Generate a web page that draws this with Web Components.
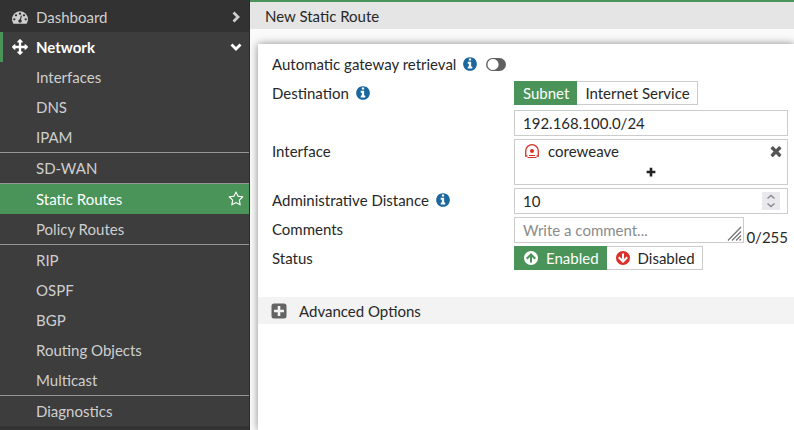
<!DOCTYPE html>
<html lang="en">
<head>
<meta charset="utf-8">
<title>New Static Route</title>
<style>
html, body { margin: 0; height: 100%; }
body { font: 15px/20px Lato, "Liberation Sans", sans-serif; color: #282828; background: #fafafa; overflow: hidden; }
</style>
</head>
<body>
<app-shell></app-shell>
<script>
const define = (name, html, setup) => customElements.define(name, class extends HTMLElement {
  constructor() {
    super();
    this.attachShadow({ mode: "open" }).innerHTML = html;
  }
  connectedCallback() { if (setup) setup(this, this.shadowRoot); }
});

const ICONS = {
  gauge: '<path d="M384 1152q0-53-37.5-90.5t-90.5-37.5-90.5 37.5-37.5 90.5 37.5 90.5 90.5 37.5 90.5-37.5 37.5-90.5zm192-448q0-53-37.5-90.5t-90.5-37.5-90.5 37.5-37.5 90.5 37.5 90.5 90.5 37.5 90.5-37.5 37.5-90.5zm428 481l101-382q6-26-7.5-48.5t-38.5-29.5-48 6.5-30 39.5l-101 382q-60 5-107 43.5t-63 98.5q-20 77 20 146t117 89 146-20 89-117q16-60-6-117t-72-91zm660-33q0-53-37.5-90.5t-90.5-37.5-90.5 37.5-37.5 90.5 37.5 90.5 90.5 37.5 90.5-37.5 37.5-90.5zm-640-640q0-53-37.5-90.5t-90.5-37.5-90.5 37.5-37.5 90.5 37.5 90.5 90.5 37.5 90.5-37.5 37.5-90.5zm448 192q0-53-37.5-90.5t-90.5-37.5-90.5 37.5-37.5 90.5 37.5 90.5 90.5 37.5 90.5-37.5 37.5-90.5zm320 448q0 261-141 483-19 29-54 29h-1402q-35 0-54-29-141-221-141-483 0-182 71-348t191-286 286-191 348-71 348 71 286 191 191 286 71 348z"/>',
  move: '<path d="M1792 896q0 26-19 45l-256 256q-19 19-45 19t-45-19-19-45v-128h-384v384h128q26 0 45 19t19 45-19 45l-256 256q-19 19-45 19t-45-19l-256-256q-19-19-19-45t19-45 45-19h128v-384h-384v128q0 26-19 45t-45 19-45-19l-256-256q-19-19-19-45t19-45l256-256q19-19 45-19t45 19 19 45v128h384v-384h-128q-26 0-45-19t-19-45 19-45l256-256q19-19 45-19t45 19l256 256q19 19 19 45t-19 45-45 19h-128v384h384v-128q0-26 19-45t45-19 45 19l256 256q19 19 19 45z"/>',
  star: '<path d="M1201 1004l306-297-422-62-189-382-189 382-422 62 306 297-73 421 378-199 377 199zm527-357q0 22-26 48l-363 354 86 500q1 7 1 20 0 50-41 50-19 0-40-12l-449-236-449 236q-22 12-40 12-21 0-31.5-14.5t-10.5-35.5q0-6 2-20l86-500-364-354q-25-27-25-48 0-37 56-46l502-73 225-455q19-41 49-41t49 41l225 455 502 73q56 9 56 46z"/>',
  info: '<path d="M1152 1376v-160q0-14-9-23t-23-9h-96v-512q0-14-9-23t-23-9h-320q-14 0-23 9t-9 23v160q0 14 9 23t23 9h96v320h-96q-14 0-23 9t-9 23v160q0 14 9 23t23 9h448q14 0 23-9t9-23zm-128-896v-160q0-14-9-23t-23-9h-192q-14 0-23 9t-9 23v160q0 14 9 23t23 9h192q14 0 23-9t9-23zm640 416q0 209-103 385.5t-279.5 279.5-385.5 103-385.5-103-279.5-279.5-103-385.5 103-385.5 279.5-279.5 385.5-103 385.5 103 279.5 279.5 103 385.5z"/>',
  times: '<path d="M1490 1322q0 40-28 68l-136 136q-28 28-68 28t-68-28l-294-294-294 294q-28 28-68 28t-68-28l-136-136q-28-28-28-68t28-68l294-294-294-294q-28-28-28-68t28-68l136-136q28-28 68-28t68 28l294 294 294-294q28-28 68-28t68 28l136 136q28 28 28 68t-28 68l-294 294 294 294q28 28 28 68z"/>',
  right: ['M5.5 3.5 10 8l-4.500 4.500', 2.8],
  down: ['M3.500 5.500 8 10l4.500-4.500', 2.8],
  plus: ['M8 3v10M3 8h10', 3],
};
const SMALL = {
  up: '<path fill-rule="evenodd" d="M8 1a7 7 0 1 0 0 14A7 7 0 0 0 8 1zM8 3l5 5-1.500 1.500L9 7.100V12.500H7V7.100L4.500 9.500 3 8z"/>',
  downcircle: '<path fill-rule="evenodd" d="M8 1a7 7 0 1 0 0 14A7 7 0 0 0 8 1zM8 13l5-5-1.500-1.500L9 8.900V3.500H7V8.900L4.500 6.500 3 8z"/>',
  square: '<path fill-rule="evenodd" d="M3 .5h10A2.500 2.500 0 0 1 15.500 3v10a2.500 2.500 0 0 1-2.500 2.500H3A2.500 2.500 0 0 1 .5 13V3A2.500 2.500 0 0 1 3 .5zM6.700 3v3.700H3v2.600h3.700V13h2.600V9.300H13V6.700H9.300V3z"/>',
  tunnel: '<g fill="none" stroke="currentColor"><path stroke-width="1.300" d="M3.500 13H1.700V8a6.300 6.300 0 0 1 12.600 0v5H12.500"/><path stroke-width="1" d="M5 12.500h6M3.500 14.500h9"/></g><circle cx="8" cy="8" r="2"/>',
  grip: '<path d="M1 14.500 14 1M5 14.500 14 5.500M9 14.500 14 9.500M12.500 14.500 14 13" fill="none" stroke="#777" stroke-width="1.300"/>',
  spin: '<path d="M4.500 5.500 8 2.500l3.500 3M4.500 10.500l3.500 3 3.500-3" fill="none" stroke="#8a8a92" stroke-width="1.500"/>',
};
define("ui-icon", `<style>:host{display:block;width:16px;height:16px;flex:none}svg{display:block;width:100%;height:100%;fill:currentColor}</style><span></span>`, (el, root) => {
  const n = el.getAttribute("name");
  let box = 16, body = SMALL[n];
  if (!body) {
    if (Array.isArray(ICONS[n])) body = `<path d="${ICONS[n][0]}" fill="none" stroke="currentColor" stroke-width="${ICONS[n][1]}"/>`;
    else { body = ICONS[n]; box = 1792; }
  }
  root.querySelector("span").innerHTML = `<svg viewBox="0 0 ${box} ${box}" aria-hidden="true">${body}</svg>`;
});

define("nav-group", `<style>
:host{display:block}
a{display:flex;align-items:center;gap:8px;height:30px;box-sizing:border-box;padding:0 5px 0 12px;color:#cfcfcf;text-decoration:none}
span{flex:1}
:host([open]) a{background:#3d3d3d;color:#fff;font-weight:bold;border-left:3px solid #4a9459;padding-left:9px}
.items{background:#3d3d3d}
</style><a href="#"><slot name="icon"></slot><span><slot name="title"></slot></span><slot name="arrow"></slot></a><div class="items"><slot></slot></div>`);

define("nav-link", `<style>
:host{display:block}
:host([ruled]){border-top:1px solid #969696}
a{display:flex;align-items:center;justify-content:space-between;height:30px;padding:0 5px 0 36px;color:#cfcfcf;text-decoration:none}
:host([current]) a{background:#4a9459;color:#fff}
</style><a href="#"><slot></slot><slot name="end"></slot></a>`);

define("side-nav", `<style>
:host{display:block;box-sizing:border-box;background:#323232;border-right:1px solid #2b2b2b;padding-top:2px}
</style><nav aria-label="Main">
<nav-group><ui-icon slot="icon" name="gauge"></ui-icon><span slot="title">Dashboard</span><ui-icon slot="arrow" name="right"></ui-icon></nav-group>
<nav-group open><ui-icon slot="icon" name="move"></ui-icon><span slot="title">Network</span><ui-icon slot="arrow" name="down"></ui-icon>
<nav-link>Interfaces</nav-link><nav-link>DNS</nav-link><nav-link>IPAM</nav-link>
<nav-link ruled>SD-WAN</nav-link>
<nav-link ruled current>Static Routes<ui-icon slot="end" name="star"></ui-icon></nav-link>
<nav-link>Policy Routes</nav-link>
<nav-link ruled>RIP</nav-link><nav-link>OSPF</nav-link><nav-link>BGP</nav-link><nav-link>Routing Objects</nav-link><nav-link>Multicast</nav-link>
<nav-link ruled>Diagnostics</nav-link></nav-group></nav>`);

define("form-row", `<style>
:host{display:grid;grid-template-columns:242px minmax(0,1fr);align-items:start}
:host([inline]){grid-template-columns:auto 1fr;column-gap:8px;min-height:26px}
.label{display:flex;align-items:center;gap:6px;min-height:24px}
.field{min-width:0}
</style><div class="label"><slot name="label"></slot></div><div class="field"><slot></slot></div>`);

define("segment-option", `<style>
:host{display:block}
button{display:flex;align-items:center;gap:7px;height:24px;box-sizing:border-box;margin:0;padding:0 7px 0 8px;border:1px solid #ccc;border-left-width:0;background:#fff;color:#282828;font:inherit}
:host([selected]) button{background:#4a9459;border-color:#4a9459;color:#fff;border-left-width:1px}
</style><button type="button"><slot></slot></button>`, (el, root) => {
  root.querySelector("button").setAttribute("aria-pressed", el.hasAttribute("selected"));
});

define("route-form", `<style>
:host{display:block}
form{display:grid;gap:3px;padding:8px 6px 0 14px}
.info{color:#1b679f}
.segments{display:flex}
.stack{display:grid;gap:5px}
.box{box-sizing:border-box;border:1px solid #ccc;background:#fff;width:100%}
input,textarea{display:block;font:inherit;color:inherit;margin:0;border-radius:0;outline:0}
input.box,textarea.box{height:26px;padding:2px 8px}
textarea{resize:none;overflow:hidden}
textarea::placeholder{color:#8c8c8c;opacity:1}
input[type=number]{appearance:textfield}
input[type=number]::-webkit-inner-spin-button{display:none}
.switch{appearance:none;box-sizing:border-box;width:20px;height:13px;margin:6px 0 0;border-radius:7px;background:radial-gradient(circle at 7px 50%,#fff 5px,#606060 6px)}
.number,.comment{position:relative}
.number button{position:absolute;right:8px;top:4px;display:grid;place-items:center;width:18px;height:18px;padding:0;border:0;background:#e9e9ed}
.comments{display:flex;align-items:flex-end;gap:2px}
.comment{flex:1;min-width:0}
.comment ui-icon{position:absolute;right:1px;bottom:1px}
.count{line-height:12px}
.members{height:46px;display:grid;grid-template-rows:22px 20px}
.member{display:flex;align-items:center;gap:8px;padding:0 3px 0 9px}
.member span{flex:1}
.members button{display:grid;place-items:center;border:0;padding:0;background:none;color:#555}
.members .add{justify-self:center;width:16px;color:#222}
.add ui-icon{width:14px;height:14px}
.tunnel{color:#d9302c}
.red{color:#d9302c}
.advanced{display:flex;align-items:center;gap:12px;width:100%;height:27px;margin-top:27px;padding:0 13px;border:0;background:#f3f3f3;color:#282828;font:inherit}
.advanced ui-icon{color:#646464}
</style>
<form>
<form-row inline><label slot="label" for="auto">Automatic gateway retrieval</label><ui-icon slot="label" class="info" name="info"></ui-icon><input class="switch" id="auto" type="checkbox"></form-row>
<form-row><label slot="label" for="dest">Destination</label><ui-icon slot="label" class="info" name="info"></ui-icon>
<div class="stack"><div class="segments" role="group" aria-label="Destination type"><segment-option selected>Subnet</segment-option><segment-option>Internet Service</segment-option></div><input class="box" id="dest" type="text" value="192.168.100.0/24"></div></form-row>
<form-row><span slot="label">Interface</span>
<div class="box members"><div class="member"><ui-icon class="tunnel" name="tunnel"></ui-icon><span>coreweave</span><button type="button" aria-label="Remove coreweave"><ui-icon name="times"></ui-icon></button></div><button class="add" type="button" aria-label="Add interface"><ui-icon name="plus"></ui-icon></button></div></form-row>
<form-row><label slot="label" for="distance">Administrative Distance</label><ui-icon slot="label" class="info" name="info"></ui-icon>
<div class="number"><input class="box" id="distance" type="number" value="10"><button type="button" aria-label="Change distance"><ui-icon name="spin"></ui-icon></button></div></form-row>
<form-row><label slot="label" for="comments">Comments</label>
<div class="comments"><div class="comment"><textarea class="box" id="comments" rows="1" placeholder="Write a comment..."></textarea><ui-icon name="grip"></ui-icon></div><span class="count">0/255</span></div></form-row>
<form-row><span slot="label">Status</span>
<div class="segments" role="group" aria-label="Status"><segment-option selected><ui-icon name="up"></ui-icon>Enabled</segment-option><segment-option><ui-icon class="red" name="downcircle"></ui-icon>Disabled</segment-option></div></form-row>
</form>
<button class="advanced" type="button" aria-expanded="false"><ui-icon name="square"></ui-icon>Advanced Options</button>`);

define("page-panel", `<style>
:host{display:flex;flex-direction:column;min-width:0;border-top:2px solid #4a9459;background:#fafafa;overflow:hidden}
header{padding:4px 15px 3px;background:#e5e5e5}
h1{margin:0;font:inherit}
section{flex:1;margin:15px 0 0 8px;background:#fff;box-shadow:0 0 8px rgba(0,0,0,.45)}
</style><header><h1><slot name="title"></slot></h1></header><section><slot></slot></section>`);

define("app-shell", `<style>
:host{display:grid;grid-template-columns:250px minmax(0,1fr);min-height:100%}
</style><side-nav></side-nav><page-panel><span slot="title">New Static Route</span><route-form></route-form></page-panel>`);
</script>
</body>
</html>
